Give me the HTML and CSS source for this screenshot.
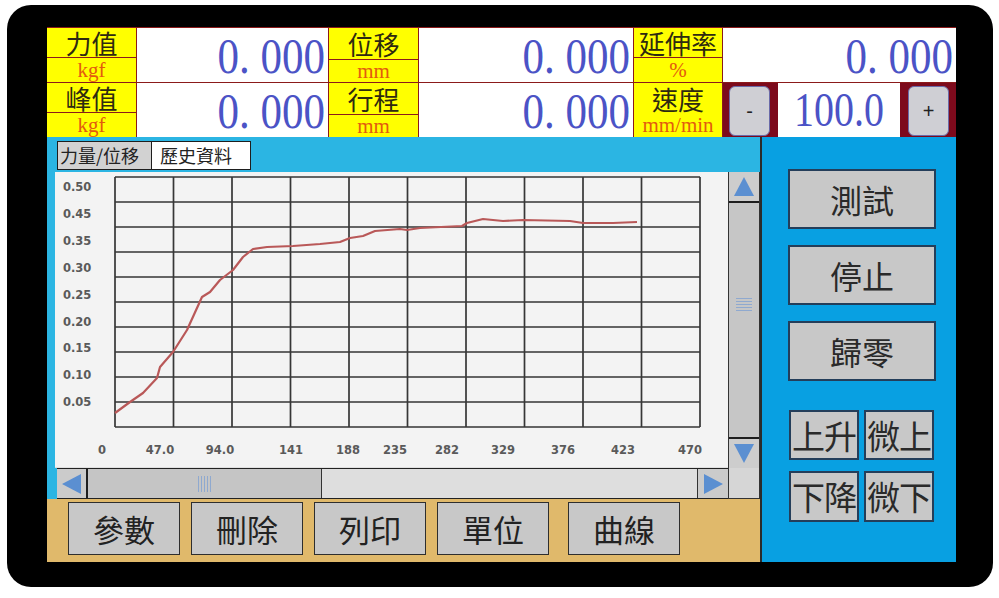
FILE: index.html
```html
<!DOCTYPE html>
<html lang="zh-Hant">
<head>
<meta charset="utf-8">
<title>HMI</title>
<link rel="stylesheet" href="styles.css">
</head>
<body>
<div class="device">
  <div class="screen">
    <div class="header">
      <div class="lbl"><div class="name">力值</div><div class="unit">kgf</div></div>
      <div class="val"><span class="num">0. 000</span></div>
      <div class="lbl"><div class="name tall">位移</div><div class="unit">mm</div></div>
      <div class="val"><span class="num">0. 000</span></div>
      <div class="lbl"><div class="name">延伸率</div><div class="unit">%</div></div>
      <div class="val"><span class="num">0. 000</span></div>

      <div class="lbl"><div class="name">峰值</div><div class="unit">kgf</div></div>
      <div class="val"><span class="num">0. 000</span></div>
      <div class="lbl"><div class="name tall">行程</div><div class="unit">mm</div></div>
      <div class="val"><span class="num">0. 000</span></div>
      <div class="lbl plain"><div class="name">速度</div><div class="unit">mm/min</div></div>
      <div class="speed">
        <div class="pm">-</div>
        <div class="speed-val"><span class="num2">100.0</span></div>
        <div class="pm">+</div>
      </div>
    </div>

    <div class="main">
      <div class="left">
        <div class="tabbar">
          <div class="tab tab-gray">力量/位移</div>
          <div class="tab tab-white">歷史資料</div>
        </div>
        <div class="work">
          <div class="chart">
            <svg width="673" height="296" viewBox="0 0 673 296">
              <path d="M60 5V255M118.5 5V255M177 5V255M235.5 5V255M294 5V255M352.5 5V255M411 5V255M469.5 5V255M528 5V255M586.5 5V255M645 5V255M60 5H645M60 30H645M60 55H645M60 80H645M60 105H645M60 130H645M60 155H645M60 180H645M60 205H645M60 230H645M60 255H645" stroke="#363636" stroke-width="1.7" fill="none"/>
              <polyline points="60,241 75,230 88,221 102,206 105,195 118,180 132,158 147,125 155,120 165,108 178,98 188,85 198,77 212,75 238,74 265,72 285,70 295,66 308,64 320,59 345,57 352,58 365,56 407,54 412,51 428,47 448,49 468,48 515,49 528,51 558,51 582,50" fill="none" stroke="#b95858" stroke-width="2.2" stroke-linejoin="round"/>
              <g class="ylab">
                <text x="8" y="15">0.50</text>
                <text x="8" y="42">0.45</text>
                <text x="8" y="69">0.35</text>
                <text x="8" y="96">0.30</text>
                <text x="8" y="123">0.25</text>
                <text x="8" y="150">0.20</text>
                <text x="8" y="176">0.15</text>
                <text x="8" y="203">0.10</text>
                <text x="8" y="230">0.05</text>
              </g>
              <g class="xlab">
                <text x="47" y="278">0</text>
                <text x="105" y="278">47.0</text>
                <text x="165" y="278">94.0</text>
                <text x="236" y="278">141</text>
                <text x="293" y="278">188</text>
                <text x="340" y="278">235</text>
                <text x="392" y="278">282</text>
                <text x="448" y="278">329</text>
                <text x="508" y="278">376</text>
                <text x="568" y="278">423</text>
                <text x="635" y="278">470</text>
              </g>
            </svg>
          </div>
          <div class="vscroll">
            <div class="vbtn vbtn-up"><svg width="20" height="19" viewBox="0 0 20 19"><polygon points="10,0 20,19 0,19" fill="#5b8fd1"/></svg></div>
            <div class="vthumb"><div class="hgrip"></div></div>
            <div class="vbtn vbtn-down"><svg width="20" height="19" viewBox="0 0 20 19"><polygon points="0,0 20,0 10,19" fill="#5b8fd1"/></svg></div>
          </div>
          <div class="hscroll">
            <div class="hbtn hbtn-left"><svg width="19" height="20" viewBox="0 0 19 20"><polygon points="19,0 19,20 0,10" fill="#5b8fd1"/></svg></div>
            <div class="hthumb"><div class="vgrip"></div></div>
            <div class="htrack"></div>
            <div class="hbtn hbtn-right"><svg width="19" height="20" viewBox="0 0 19 20"><polygon points="0,0 19,10 0,20" fill="#5b8fd1"/></svg></div>
          </div>
          <div class="corner"></div>
        </div>
        <div class="bottombar">
          <div class="bbtn">參數</div>
          <div class="bbtn">刪除</div>
          <div class="bbtn">列印</div>
          <div class="bbtn">單位</div>
          <div class="bbtn bbtn-wide">曲線</div>
        </div>
      </div>
      <div class="right">
        <div class="rbtn">測試</div>
        <div class="rbtn">停止</div>
        <div class="rbtn">歸零</div>
        <div class="smallgrid">
          <div class="sbtn">上升</div>
          <div class="sbtn">微上</div>
          <div class="sbtn">下降</div>
          <div class="sbtn">微下</div>
        </div>
      </div>
    </div>
  </div>
</div>
</body>
</html>
```

FILE: styles.css
```css
html, body {
  margin: 0;
  padding: 0;
  background: #ffffff;
}
body {
  font-family: "Noto Sans CJK TC", "Noto Sans", sans-serif;
}
.device {
  box-sizing: border-box;
  width: 986px;
  height: 582px;
  margin: 5px 0 0 7px;
  background: #000;
  border-radius: 24px;
  padding: 22px 37px 25px 40px;
}
.screen {
  width: 909px;
  height: 535px;
  display: flex;
  flex-direction: column;
}

/* header */
.header {
  display: grid;
  grid-template-columns: 89px 191px 89px 214px 88px 233px;
  grid-template-rows: 54px 54px;
  gap: 1px;
  padding: 1px 0 0 0;
  background: #8b1a1a;
  height: 110px;
  box-sizing: border-box;
}
.lbl {
  background: #ffff00;
  display: flex;
  flex-direction: column;
}
.lbl .name {
  height: 29px;
  border-bottom: 1px solid #8b1a1a;
  display: flex;
  align-items: center;
  justify-content: center;
  font-size: 26px;
  line-height: 26px;
  color: #2e2a10;
  white-space: nowrap;
}
.lbl .name.tall {
  height: 31px;
}
.lbl .unit {
  flex: 1;
  display: flex;
  align-items: center;
  justify-content: center;
  font-family: "Liberation Serif", serif;
  font-size: 21px;
  line-height: 18px;
  color: #e35b0e;
  white-space: nowrap;
}
.lbl.plain .name {
  border-bottom: none;
  height: 30px;
  padding-top: 2px;
  box-sizing: border-box;
}
.lbl.plain .unit {
  align-items: flex-start;
  padding-top: 3px;
}
.val {
  background: #fff;
  display: flex;
  align-items: center;
  justify-content: flex-end;
  padding-right: 3px;
  overflow: hidden;
}
.num {
  display: inline-block;
  font-family: "Liberation Serif", serif;
  font-size: 43px;
  line-height: 1;
  color: #4b53c6;
  transform: scaleY(1.18);
  white-space: pre;
}
.speed {
  background: #7d0a1c;
  display: flex;
  align-items: stretch;
  padding: 0 0 0 6px;
  gap: 8px;
}
.pm {
  box-sizing: border-box;
  width: 41px;
  margin: 3px 0 1px 0;
  background: #cfcfd4;
  border: 1px solid #6a6aa8;
  border-radius: 6px;
  display: flex;
  align-items: center;
  justify-content: center;
  font-family: "Liberation Sans", sans-serif;
  font-size: 20px;
  color: #222;
}
.speed-val {
  width: 122px;
  background: #fff;
  display: flex;
  align-items: center;
  justify-content: center;
}
.num2 {
  display: inline-block;
  font-family: "Liberation Serif", serif;
  font-size: 40px;
  line-height: 1;
  color: #4b53c6;
  transform: scaleY(1.2);
}

/* main */
.main {
  flex: 1;
  display: flex;
}
.left {
  width: 713px;
  display: flex;
  flex-direction: column;
}
.tabbar {
  height: 35px;
  box-sizing: border-box;
  background: #2bb5e3;
  padding: 4px 0 0 10px;
  display: flex;
  align-items: flex-start;
}
.tab {
  box-sizing: border-box;
  height: 29px;
  border: 1px solid #1e1e1e;
  font-size: 18px;
  line-height: 26px;
  color: #222;
  padding-left: 2px;
  white-space: nowrap;
}
.tab-gray {
  width: 95px;
  background: #d2d2d2;
}
.tab-white {
  width: 99px;
  background: #fff;
  border-left: none;
  padding-left: 8px;
}
.work {
  display: grid;
  grid-template-columns: 8px 673px 32px;
  grid-template-rows: 296px 31px;
  background: #2bb5e3;
}
.chart {
  grid-column: 2;
  grid-row: 1;
  background: #f3f3f3;
  border-bottom: 1px solid #e0e0e0;
  box-sizing: border-box;
}
.chart svg {
  display: block;
}
.ylab text {
  font-family: "DejaVu Sans", sans-serif;
  font-weight: bold;
  font-size: 11.5px;
  fill: #5a5a5a;
  dominant-baseline: middle;
}
.xlab text {
  font-family: "DejaVu Sans", sans-serif;
  font-weight: bold;
  font-size: 11.5px;
  fill: #5a5a5a;
  text-anchor: middle;
  dominant-baseline: middle;
}
.vscroll {
  grid-column: 3;
  grid-row: 1;
  display: flex;
  flex-direction: column;
  background: #c9c9c9;
  border-left: 1px solid #333;
  border-right: 1px solid #333;
}
.vbtn {
  height: 31px;
  box-sizing: border-box;
  display: flex;
  align-items: center;
  justify-content: center;
  background: #cdcdcd;
}
.vbtn-up {
  border-bottom: 2px solid #1e1e1e;
}
.vbtn-down {
  border-top: 2px solid #1e1e1e;
}
.vthumb {
  flex: 1;
  display: flex;
  align-items: center;
  justify-content: center;
  background: #c6c6c6;
}
.hgrip {
  width: 16px;
  height: 14px;
  margin-bottom: 30px;
  background: repeating-linear-gradient(to bottom, #8fa9cf 0 1px, transparent 1px 3px);
}
.hscroll {
  grid-column: 2;
  grid-row: 2;
  display: flex;
  border-top: 1px solid #222;
  border-bottom: 1px solid #222;
  background: #dedede;
  margin-left: 2px;
}
.hbtn {
  width: 31px;
  box-sizing: border-box;
  display: flex;
  align-items: center;
  justify-content: center;
  background: #cbcbcb;
}
.hbtn-left {
  border-right: 2px solid #1e1e1e;
}
.hbtn-right {
  border-left: 1px solid #333;
}
.hthumb {
  width: 233px;
  background: #c5c5c5;
  border-right: 1px solid #333;
  display: flex;
  align-items: center;
  justify-content: center;
}
.vgrip {
  width: 14px;
  height: 16px;
  background: repeating-linear-gradient(to right, #8fa9cf 0 1px, transparent 1px 3px);
}
.htrack {
  flex: 1;
  background: #dedede;
}
.corner {
  grid-column: 3;
  grid-row: 2;
  background: #d6d6d6;
  border: 1px solid #333;
  border-top: none;
}
.bottombar {
  flex: 1;
  background: #e0b96b;
  display: flex;
  align-items: flex-start;
  padding: 3px 0 0 21px;
  gap: 11px;
}
.bbtn {
  box-sizing: border-box;
  width: 112px;
  height: 53px;
  background: #c8c8c8;
  border: 1px solid #2e2e2e;
  display: flex;
  align-items: center;
  justify-content: center;
  font-size: 31px;
  line-height: 1;
  color: #222;
}
.bbtn-wide {
  margin-left: 8px;
}

/* right panel */
.right {
  width: 196px;
  box-sizing: border-box;
  background: #08a0e2;
  border-left: 2px solid #2b2b2b;
  padding: 32px 0 0 26px;
  display: flex;
  flex-direction: column;
}
.rbtn {
  box-sizing: border-box;
  width: 148px;
  height: 60px;
  margin-bottom: 16px;
  background: #c8c8c8;
  border: 2px solid #243e5a;
  display: flex;
  align-items: center;
  justify-content: center;
  font-size: 32px;
  line-height: 1;
  color: #2a2a2a;
}
.smallgrid {
  margin-top: 13px;
  margin-left: 1px;
  display: grid;
  grid-template-columns: 70px 70px;
  grid-template-rows: 50px 51px;
  column-gap: 5px;
  row-gap: 11px;
}
.sbtn {
  box-sizing: border-box;
  background: #c8c8c8;
  border: 2px solid #243e5a;
  display: flex;
  align-items: center;
  justify-content: center;
  font-size: 33px;
  line-height: 1;
  letter-spacing: -1px;
  color: #2a2a2a;
  overflow: visible;
  white-space: nowrap;
}
```
